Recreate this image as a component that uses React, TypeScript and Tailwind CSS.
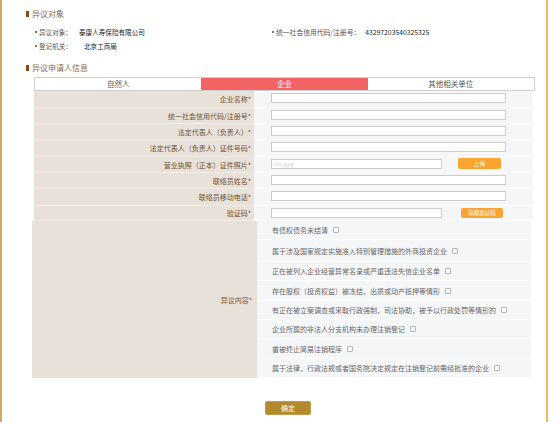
import React from "react";

const fieldRows: { label: string; kind: "full" | "upload" | "code"; h: string }[] = [
  { label: "企业名称", kind: "full", h: "h-[17px]" },
  { label: "统一社会信用代码/注册号", kind: "full", h: "h-[16px]" },
  { label: "法定代表人（负责人）", kind: "full", h: "h-[16px]" },
  { label: "法定代表人（负责人）证件号码", kind: "full", h: "h-[17px]" },
  { label: "营业执照（正本）证件照片", kind: "upload", h: "h-[16px]" },
  { label: "联络员姓名", kind: "full", h: "h-[16px]" },
  { label: "联络员移动电话", kind: "full", h: "h-[17px]" },
  { label: "验证码", kind: "code", h: "h-[15px]" },
];

const items: { text: string; h: string }[] = [
  { text: "有债权债务未结清", h: "h-[19px]" },
  { text: "属于涉及国家规定实施准入特别管理措施的外商投资企业", h: "h-[22px]" },
  { text: "正在被列入企业经营异常名录或严重违法失信企业名单", h: "h-[19px]" },
  { text: "存在股权（投资权益）被冻结，出质或动产抵押等情形", h: "h-[20px]" },
  { text: "有正在被立案调查或采取行政强制，司法协助，被予以行政处罚等情形的", h: "h-[19px]" },
  { text: "企业所属的非法人分支机构未办理注销登记", h: "h-[19px]" },
  { text: "曾被终止简易注销程序", h: "h-[20px]" },
  { text: "属于法律，行政法规或者国务院决定规定在注销登记前需经批准的企业", h: "h-[19px]" },
];

function Heading({ text }: { text: string }) {
  return (
    <div className="flex items-center h-[10px] ml-[24px]">
      <span className="w-[3px] h-[6px] bg-[#8a4a14]" />
      <span className="ml-[3px] text-[8px] leading-[10px] text-[#8b6a4c]">{text}</span>
    </div>
  );
}

function Bullet() {
  return <span className="w-[2px] h-[2px] rounded-full bg-[#444] mr-[2px]" />;
}

export default function App() {
  return (
    <div className="w-[553px] h-[422px] bg-white overflow-hidden font-['Noto_Sans_CJK_SC','Noto_Sans',sans-serif]">
      <div className="w-[548px] h-[422px] border-l-2 border-l-[#d3a862] border-r-2 border-r-[#f3b656] flex flex-col">
        <div className="pt-[9px]">
          <Heading text="异议对象" />
        </div>

        <div className="mt-[8px] flex h-[10px] items-center text-[6.6px] leading-[10px]">
          <div className="ml-[33px] w-[237px] flex items-center">
            <Bullet />
            <span className="text-[#555]">异议对象：</span>
            <span className="ml-[7px] text-[#222]">泰康人寿保险有限公司</span>
          </div>
          <div className="flex items-center text-[6.8px]">
            <Bullet />
            <span className="text-[#555]">统一社会信用代码/注册号：</span>
            <span className="ml-[5px] text-[#222]">43297203540325325</span>
          </div>
        </div>

        <div className="mt-[4px] flex h-[10px] items-center text-[6.6px] leading-[10px]">
          <div className="ml-[33px] flex items-center">
            <Bullet />
            <span className="text-[#555]">登记机关：</span>
            <span className="ml-[12px] text-[#222]">北京工商局</span>
          </div>
        </div>

        <div className="mt-[12px]">
          <Heading text="异议申请人信息" />
        </div>

        <div className="mt-[4px] ml-[32px] w-[501px] h-[14px] grid grid-cols-3 border border-[#cfcfcf] text-[7.5px] leading-[12px]">
          <div className="flex items-center justify-center text-[#555] bg-white">自然人</div>
          <div className="flex items-center justify-center text-white bg-[#f46363]">企业</div>
          <div className="flex items-center justify-center text-[#555] bg-white">其他相关单位</div>
        </div>

        <div className="ml-[32px] w-[499px] flex flex-col">
          {fieldRows.map((r) => (
            <div key={r.label} className={`flex ${r.h}`}>
              <div className="w-[220px] bg-[#e8e1da] border-b border-[#f2ede8] flex items-center justify-end pr-[3px] text-[7px] leading-[10px] text-[#6f5232]">
                {r.label}*
              </div>
              <div className="flex-1 bg-[#f5f6f8] border-b border-white flex items-start pt-[2px] pl-[17px]">
                {r.kind === "full" && (
                  <div className="w-[235px] h-[10px] bg-white border border-[#cccccc]" />
                )}
                {r.kind === "upload" && (
                  <>
                    <div className="w-[171px] h-[10px] bg-white border border-[#cccccc] text-[5.5px] leading-[8px] text-[#d8d8d8] pl-[1px] overflow-hidden">
                      doc,gpg
                    </div>
                    <div className="ml-[16px] -mt-[1px] w-[43px] h-[11px] rounded-[2px] bg-[#f8a532] text-white text-[6px] leading-[11px] text-center">
                      上传
                    </div>
                  </>
                )}
                {r.kind === "code" && (
                  <>
                    <div className="w-[171px] h-[10px] bg-white border border-[#cccccc]" />
                    <div className="ml-[19px] w-[42px] h-[10px] rounded-[2px] bg-[#f8a532] text-white text-[5.5px] leading-[10px] text-center">
                      获取验证码
                    </div>
                  </>
                )}
              </div>
            </div>
          ))}
        </div>

        <div className="ml-[30px] w-[499px] flex">
          <div className="w-[225px] bg-[#e8e1da] flex items-center justify-end pr-[5px] text-[7px] leading-[10px] text-[#7d5628]">
            异议内容*
          </div>
          <div className="flex-1 bg-[#f5f6f8] flex flex-col">
            {items.map((it) => (
              <div
                key={it.text}
                className={`${it.h} flex items-center pl-[15px] border-b border-white text-[7px] leading-[10px] text-[#666]`}
              >
                <span>{it.text}</span>
                <span className="ml-[5px] w-[6px] h-[6px] border border-[#b5b5b5] rounded-[1px] bg-[#fafafa]" />
              </div>
            ))}
          </div>
        </div>

        <div className="mt-[23px] ml-[263px] w-[46px] h-[14px] rounded-[2px] bg-[#b38a30] border border-[#c29a45] text-white text-[7px] leading-[12px] text-center">
          确定
        </div>
      </div>
    </div>
  );
}
